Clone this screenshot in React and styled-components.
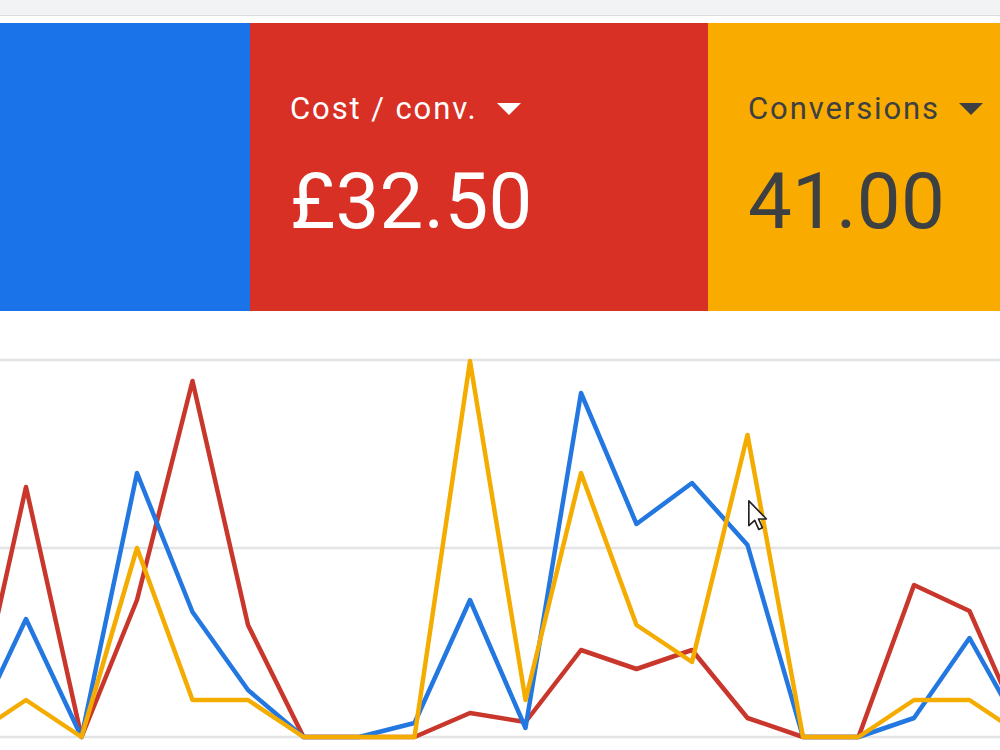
import React from 'react'
import styled, { createGlobalStyle } from 'styled-components'

const GlobalStyle = createGlobalStyle`
    html, body {
        margin: 0;
        padding: 0;
        background: #fff;
        overflow: hidden;
    }
    body {
        font-family: Roboto, "Liberation Sans", Arial, sans-serif;
    }
`

const Page = styled.div`
    width: 1000px;
    height: 750px;
    display: flex;
    flex-direction: column;
    overflow: hidden;
`

const TopBar = styled.div`
    height: 15px;
    flex: none;
    background: #f1f3f4;
    border-bottom: 1px solid #dadce0;
    margin-bottom: 7px;
`

const Cards = styled.div`
    display: flex;
    height: 288px;
    flex: none;
`

const Card = styled.div`
    width: ${p => p.width ? `${p.width}px` : 'auto'};
    flex: ${p => p.width ? 'none' : '1'};
    background: ${p => p.bg};
    color: ${p => p.fg};
    padding: 70px 0 0 40px;
    box-sizing: border-box;
    display: flex;
    flex-direction: column;
    gap: 39px;
`

const Label = styled.div`
    display: flex;
    align-items: center;
    gap: 19px;
    font-size: 31px;
    line-height: 31px;
    font-weight: 400;
    letter-spacing: 1.9px;
    white-space: nowrap;
`

const Caret = styled.span`
    width: 0;
    height: 0;
    border-left: 12px solid transparent;
    border-right: 12px solid transparent;
    border-top: 12px solid ${p => p.color};
    margin-top: 1px;
`

const Value = styled.div`
    font-size: 78px;
    line-height: 78px;
    font-weight: 400;
    letter-spacing: 0.2px;
    white-space: nowrap;
`

const ChartWrap = styled.div`
    position: relative;
    flex: 1;
`

const ChartSvg = styled.svg`
    display: block;
    width: 1000px;
    height: 439px;
`

const Cursor = styled.svg`
    position: absolute;
    left: 747px;
    top: 188px;
    width: 22px;
    height: 33px;
`

const TOP = 311
const xs = Array.from({ length: 20 }, (_, i) => -29.5 + 55.5 * i)

const series = [
    {
        color: '#c9372c',
        ys: [737, 487, 737, 600, 381, 625, 737, 737, 737, 713, 722, 650, 669, 650, 718, 737, 737, 585, 611, 737],
    },
    {
        color: '#2377e0',
        ys: [737, 619, 737, 473, 612, 690, 737, 737, 723, 600, 728, 393, 524, 483, 545, 737, 737, 718, 638, 737],
    },
    {
        color: '#f5ac00',
        ys: [737, 700, 737, 548, 700, 700, 737, 737, 737, 361, 700, 473, 625, 662, 435, 737, 737, 700, 700, 737],
    },
]

const grid = [360, 548, 737]

const Chart = () => (
    <ChartWrap>
        <ChartSvg viewBox="0 0 1000 439">
            {grid.map(y => (
                <line key={y} x1="0" x2="1000" y1={y - TOP} y2={y - TOP}
                    stroke="#e3e4e6" strokeWidth="2.5" />
            ))}
            {series.map(s => (
                <polyline key={s.color}
                    points={s.ys.map((y, i) => `${xs[i]},${y - TOP}`).join(' ')}
                    fill="none" stroke={s.color} strokeWidth="4.5"
                    strokeLinejoin="round" />
            ))}
        </ChartSvg>
        <Cursor viewBox="0 0 12 18">
            <path d="M1 1 L1 14.5 L4.2 11.6 L6.4 16.6 L8.4 15.7 L6.3 10.9 L10.6 10.9 Z"
                fill="#fff" stroke="#222" strokeWidth="0.9" strokeLinejoin="round" />
        </Cursor>
    </ChartWrap>
)

const cards = [
    { bg: '#1a73e8', fg: '#fff', width: 250 },
    { bg: '#d93025', fg: '#fff', width: 458, label: 'Cost / conv.', value: '£32.50' },
    { bg: '#f9ab00', fg: '#3c4043', label: 'Conversions', value: '41.00' },
]

export default () => (
    <Page>
        <GlobalStyle />
        <TopBar />
        <Cards>
            {cards.map(c => (
                <Card key={c.bg} bg={c.bg} fg={c.fg} width={c.width}>
                    {c.label && (
                        <Label>
                            {c.label}
                            <Caret color={c.fg} />
                        </Label>
                    )}
                    {c.value && <Value>{c.value}</Value>}
                </Card>
            ))}
        </Cards>
        <Chart />
    </Page>
)
